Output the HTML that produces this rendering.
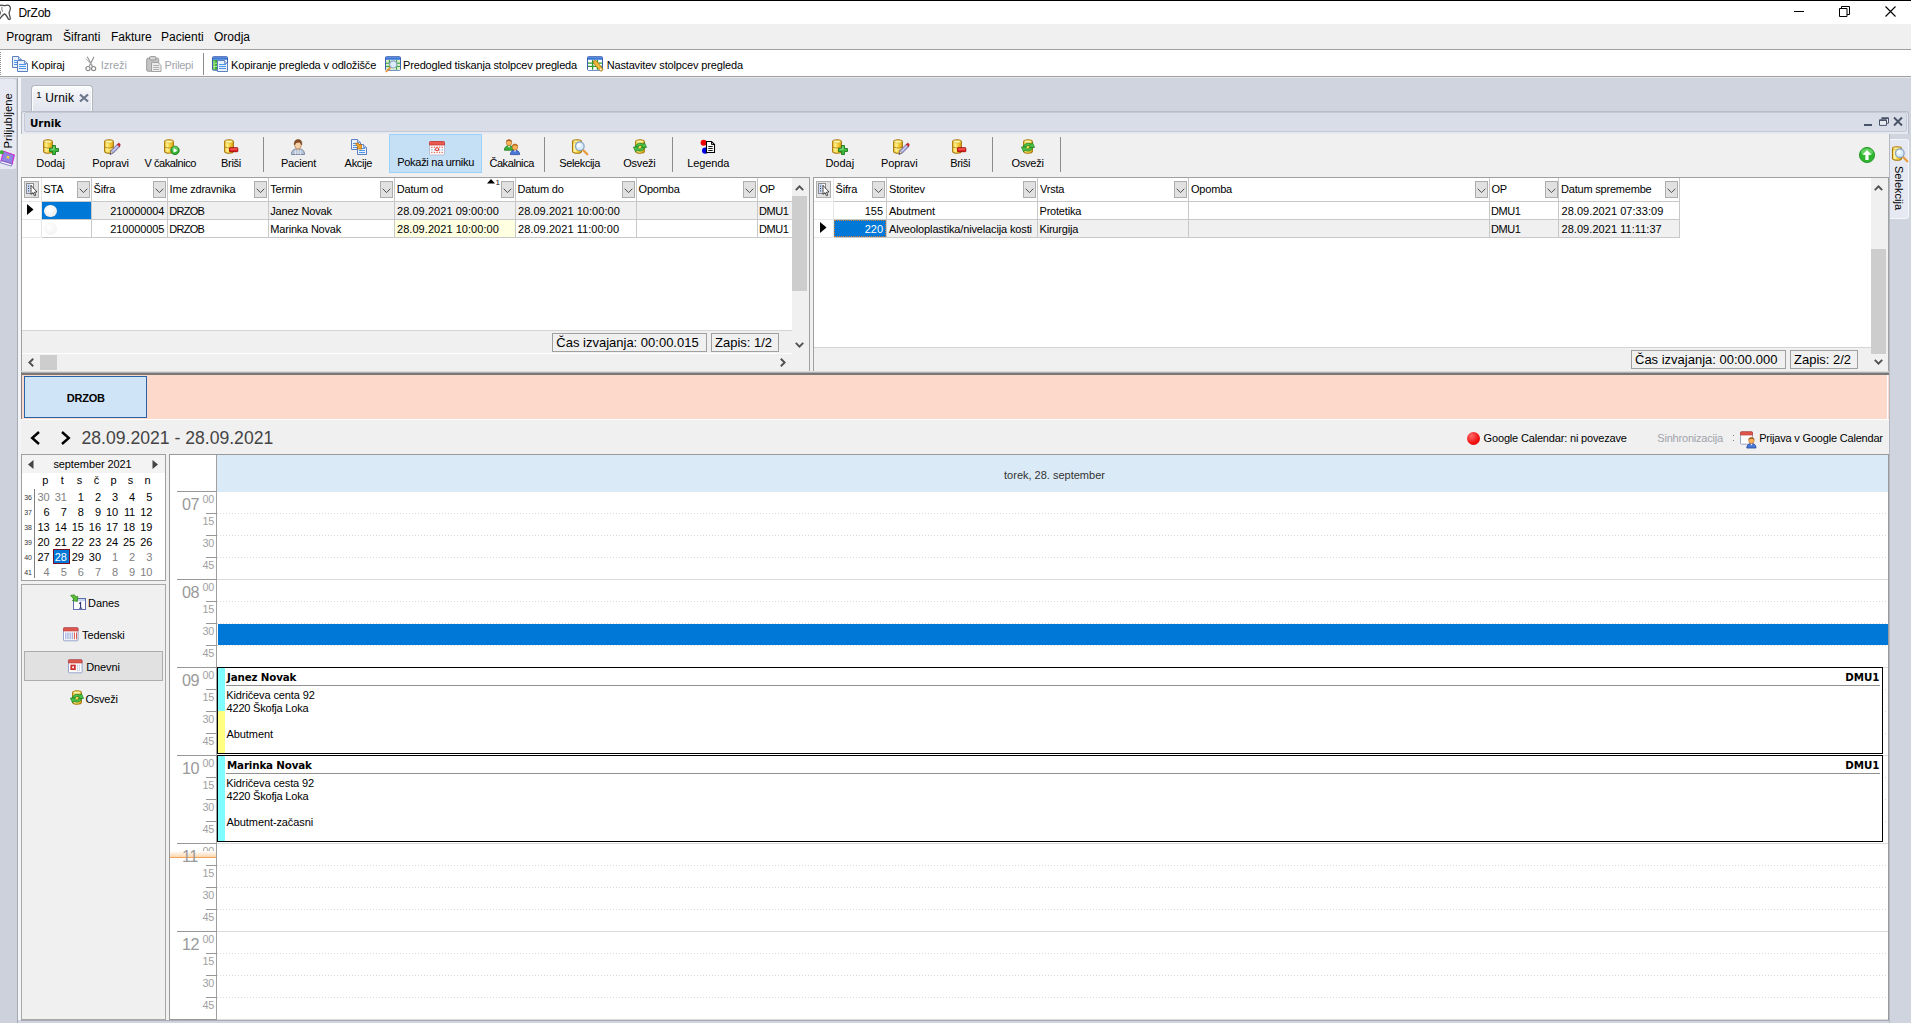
<!DOCTYPE html>
<html lang="sl"><head><meta charset="utf-8"><title>DrZob</title>
<style>
html,body{margin:0;padding:0;}
body{width:1911px;height:1023px;overflow:hidden;position:relative;background:#d0d4de;font-family:"Liberation Sans",sans-serif;font-size:11px;}
body div,body span,body svg{position:absolute;display:block;}
svg{overflow:visible}
</style></head><body>
<svg width="0" height="0" style="left:0;top:0"><defs><linearGradient id="gcyl" x1="0" y1="0" x2="1" y2="0"><stop offset="0" stop-color="#f2c832"/><stop offset=".3" stop-color="#fff08a"/><stop offset=".6" stop-color="#f5cf3a"/><stop offset="1" stop-color="#d9a215"/></linearGradient></defs></svg>
<div style="left:0px;top:0px;width:1911px;height:24px;background:#fff;"></div>
<div style="left:0px;top:0px;width:1911px;height:1px;background:#000;"></div>
<svg style="left:-3.5px;top:4px;" width="15" height="16.5" viewBox="0 0 14 16" preserveAspectRatio="none"><path d="M2.4 1.6 C4 .6 5.6 1.6 7 1.6 C8.4 1.6 10.2 .4 11.6 1.8 C13 3.4 12.4 6 11.4 8 C10.8 9.4 12.8 13.6 12.4 14.6 C12 15.4 10.8 15 10.4 14.2 C9.6 12.6 8.4 10.2 7 9.6 C5.6 10.2 3.4 13.4 2.2 14.8 C1.6 15.4 .4 15 .8 14 C1.4 12.6 3.4 9.6 3 8.2 C2.4 6.2 .8 3.2 2.4 1.6Z" fill="#fff" stroke="#4a4a4a" stroke-width="1.2"/><path d="M4.6 2.6 C4 4.4 4.4 6 5.4 7.4" fill="none" stroke="#9a9a9a" stroke-width="1.2"/></svg>
<span style="top:6.84px;font-size:12px;line-height:12px;color:#000;white-space:pre;letter-spacing:-0.25px;left:18.4px;">DrZob</span>
<div style="left:1794px;top:11px;width:10px;height:1px;background:#000;"></div>
<svg style="left:1839px;top:6px;" width="11" height="11" viewBox="0 0 11 11"><path d="M.5 2.5h7.5v8h-7.5zM2.5 2.5v-2h8v8h-2.5" fill="none" stroke="#000" stroke-width="1"/></svg>
<svg style="left:1885px;top:6px;" width="11" height="11" viewBox="0 0 11 11"><path d="M.5 .5l10 10M10.5 .5l-10 10" stroke="#000" stroke-width="1.1"/></svg>
<div style="left:0px;top:24px;width:1911px;height:25px;background:#f0f0f0;"></div>
<span style="top:30.84px;font-size:12px;line-height:12px;color:#000;white-space:pre;left:6.3px;">Program</span>
<span style="top:30.84px;font-size:12px;line-height:12px;color:#000;white-space:pre;left:63px;">Šifranti</span>
<span style="top:30.84px;font-size:12px;line-height:12px;color:#000;white-space:pre;left:111px;">Fakture</span>
<span style="top:30.84px;font-size:12px;line-height:12px;color:#000;white-space:pre;left:161px;">Pacienti</span>
<span style="top:30.84px;font-size:12px;line-height:12px;color:#000;white-space:pre;left:214px;">Orodja</span>
<div style="left:0px;top:49px;width:1911px;height:1px;background:#a0a0a0;"></div>
<div style="left:0px;top:50px;width:1911px;height:26px;background:#fff;"></div>
<div style="left:0px;top:76px;width:1911px;height:1px;background:#a0a0a0;"></div>
<div style="left:0px;top:77px;width:1911px;height:1px;background:#e8e8e8;"></div>
<div style="left:0px;top:52px;width:1px;height:1px;background:#909090;"></div>
<div style="left:0px;top:54px;width:1px;height:1px;background:#909090;"></div>
<div style="left:0px;top:56px;width:1px;height:1px;background:#909090;"></div>
<div style="left:0px;top:58px;width:1px;height:1px;background:#909090;"></div>
<div style="left:0px;top:60px;width:1px;height:1px;background:#909090;"></div>
<div style="left:0px;top:62px;width:1px;height:1px;background:#909090;"></div>
<div style="left:0px;top:64px;width:1px;height:1px;background:#909090;"></div>
<div style="left:0px;top:66px;width:1px;height:1px;background:#909090;"></div>
<div style="left:0px;top:68px;width:1px;height:1px;background:#909090;"></div>
<div style="left:0px;top:70px;width:1px;height:1px;background:#909090;"></div>
<div style="left:0px;top:72px;width:1px;height:1px;background:#909090;"></div>
<div style="left:0px;top:74px;width:1px;height:1px;background:#909090;"></div>
<svg style="left:11.5px;top:56px;" width="16" height="16" viewBox="0 0 16 16"><path d="M0.5 0.5h6l3 3v8h-9z" fill="#eaf2fd" stroke="#5d7fc0" stroke-width="1"/><path d="M6.5 0.5v3h3" fill="#c6d8f4" stroke="#5d7fc0" stroke-width=".8"/><rect x="2.0" y="4" width="6" height="1" fill="#4d95e8"/><rect x="2.0" y="6" width="6" height="1" fill="#4d95e8"/><rect x="2.0" y="8" width="6" height="1" fill="#4d95e8"/><path d="M5.5 4.5h7l3 3v8h-10z" fill="#eaf2fd" stroke="#5d7fc0" stroke-width="1"/><path d="M12.5 4.5v3h3" fill="#c6d8f4" stroke="#5d7fc0" stroke-width=".8"/><rect x="7.0" y="8" width="7" height="1" fill="#4d95e8"/><rect x="7.0" y="10" width="7" height="1" fill="#4d95e8"/><rect x="7.0" y="12" width="7" height="1" fill="#4d95e8"/></svg>
<span style="top:59.69px;font-size:11px;line-height:11px;color:#000;white-space:pre;letter-spacing:-0.15px;left:31.3px;">Kopiraj</span>
<svg style="left:83px;top:55.5px;" width="14" height="16" viewBox="0 0 14 16"><path d="M4.2 .8 L9.6 10.6 M11 .8 L6.2 10.2" stroke="#9a9a9a" stroke-width="1.3" fill="none"/><circle cx="5" cy="12.6" r="2.1" fill="none" stroke="#8c8c8c" stroke-width="1.2"/><circle cx="10.6" cy="12.6" r="2.1" fill="none" stroke="#8c8c8c" stroke-width="1.2"/><path d="M2.6 2.6 L8 8.2" stroke="#b4b4b4" stroke-width="1"/></svg>
<span style="top:59.69px;font-size:11px;line-height:11px;color:#a0a4ac;white-space:pre;left:100.7px;">Izreži</span>
<svg style="left:146px;top:55.5px;" width="16" height="16" viewBox="0 0 16 16"><rect x=".7" y="2.2" width="12" height="13" rx="1.2" fill="#c4c4c4" stroke="#9a9a9a" stroke-width="1"/><rect x="3.6" y=".6" width="6.2" height="3.4" rx=".8" fill="#d8d8d8" stroke="#8e8e8e" stroke-width=".9"/><path d="M5.5 6.5h6.5l3 3v6h-9.5z" fill="#ededed" stroke="#9c9c9c" stroke-width=".9"/><path d="M7.2 9.5h6M7.2 11.5h6M7.2 13.5h6" stroke="#a8a8a8" stroke-width=".9"/></svg>
<span style="top:59.69px;font-size:11px;line-height:11px;color:#a0a4ac;white-space:pre;letter-spacing:-0.3px;left:164.6px;">Prilepi</span>
<div style="left:203px;top:53px;width:1px;height:22px;background:#8c8c8c;"></div>
<svg style="left:211.5px;top:56px;" width="16" height="16" viewBox="0 0 16 16"><rect x=".5" y=".7" width="15" height="13.5" rx=".8" fill="#fff" stroke="#3a5fae" stroke-width="1"/><rect x="1" y="1.2" width="14" height="2.6" fill="#3c78d8"/><rect x="1" y="4" width="5" height="9.8" fill="#35a535"/><path d="M1 7.2h5M1 10.4h5" stroke="#c6f0b0" stroke-width="1"/><rect x="1.2" y="4.6" width="2" height="2" fill="#8fe070"/><rect x="1.2" y="7.8" width="2" height="2" fill="#8fe070"/><rect x="1.2" y="11" width="2" height="2" fill="#8fe070"/><path d="M5.5 4.5h7l3 3v8h-10z" fill="#eaf2fd" stroke="#5d7fc0" stroke-width="1"/><path d="M12.5 4.5v3h3" fill="#c6d8f4" stroke="#5d7fc0" stroke-width=".8"/><rect x="7.0" y="8" width="7" height="1" fill="#4d95e8"/><rect x="7.0" y="10" width="7" height="1" fill="#4d95e8"/><rect x="7.0" y="12" width="7" height="1" fill="#4d95e8"/></svg>
<span style="top:59.69px;font-size:11px;line-height:11px;color:#000;white-space:pre;letter-spacing:-0.16px;left:231.1px;">Kopiranje pregleda v odložišče</span>
<svg style="left:384.5px;top:56px;" width="16" height="16" viewBox="0 0 16 16"><rect x=".5" y=".7" width="15" height="13.5" rx=".8" fill="#fff" stroke="#3a5fae" stroke-width="1"/><rect x="1" y="1.2" width="14" height="2.6" fill="#3c78d8"/><path d="M1 4h14v9.8h-14z" fill="#dff0d0"/><path d="M1 7.2h14M1 10.4h14M4.4 4v9.8M11.6 4v9.8" stroke="#2f9a2f" stroke-width="1"/><path d="M5.4 11.4 L1.4 15.4" stroke="#e89a3c" stroke-width="2" stroke-linecap="round"/><circle cx="8.2" cy="8.4" r="3.6" fill="#dcecfb" stroke="#8aa4c4" stroke-width="1.2"/></svg>
<span style="top:59.69px;font-size:11px;line-height:11px;color:#000;white-space:pre;letter-spacing:-0.16px;left:403px;">Predogled tiskanja stolpcev pregleda</span>
<svg style="left:587px;top:56px;" width="16" height="16" viewBox="0 0 16 16"><rect x=".5" y=".7" width="15" height="13.5" rx=".8" fill="#fff" stroke="#3a5fae" stroke-width="1"/><rect x="1" y="1.2" width="14" height="2.6" fill="#3c78d8"/><path d="M1 4h14v9.8h-14z" fill="#fff"/><path d="M1 7.2h14M1 10.4h14M5.6 4v9.8M10.4 4v9.8" stroke="#2f9a2f" stroke-width="1.3"/><path d="M6.2 5 L9 4.4 L15.6 12.6 C16.6 14 14.2 16 13 14.6 L7 7.8 Z" fill="#f0b838" stroke="#a87410" stroke-width=".8"/><circle cx="13.8" cy="13.4" r=".8" fill="#fff"/></svg>
<span style="top:59.69px;font-size:11px;line-height:11px;color:#000;white-space:pre;letter-spacing:-0.16px;left:606.7px;">Nastavitev stolpcev pregleda</span>
<div style="left:0px;top:78px;width:17px;height:945px;background:#cdd1db;"></div>
<div style="left:0px;top:79px;width:16px;height:90px;background:#e6e9f1;border-radius:0 2px 2px 0;"></div>
<div style="left:17px;top:78px;width:1px;height:945px;background:#a8acb4;"></div>
<div style="left:18px;top:78px;width:3px;height:945px;background:#f3f4f7;"></div>
<span style="left:8.5px;top:121px;width:0;height:0;overflow:visible;"><span style="left:-28.2px;top:-6px;width:55px;font-size:11.3px;line-height:12px;white-space:pre;transform:rotate(-90deg);transform-origin:50% 50%;">Priljubljene</span></span>
<svg style="left:-1px;top:149px;" width="17" height="17" viewBox="0 0 15 15"><g transform="rotate(28 7 8)"><path d="M1.5 4 L11.5 2.5 L13.5 10.5 L3.5 12.5Z" fill="#8c84e0" stroke="#d020d0" stroke-width=".9"/><path d="M3.5 12.5 L13.5 10.5 L13.8 12.4 L4 14.4Z" fill="#f4f4ff" stroke="#6a62c0" stroke-width=".6"/><path d="M6 6.2l2.4-.6.6 2.6-1.2-.6-1.1 1z" fill="#f0d040"/></g><circle cx="2.4" cy="2.8" r="1.8" fill="#38b038"/></svg>
<div style="left:31px;top:85px;width:62px;height:26px;background:linear-gradient(#fbfcfd,#eceef4 45%,#e2e5ee);border-radius:4px 4px 0 0;border:1px solid #b4b7be;border-bottom:none;box-sizing:border-box;box-shadow:inset 1px 1px 0 #fdfeff,inset -1px 0 0 #fdfeff;"></div>
<span style="top:89.96px;font-size:9.5px;line-height:9.5px;color:#000;white-space:pre;left:36.3px;">1</span>
<span style="top:91.84px;font-size:12px;line-height:12px;color:#000;white-space:pre;letter-spacing:0.2px;left:45.2px;">Urnik</span>
<svg style="left:78.5px;top:94px;" width="10" height="8" viewBox="0 0 10 8"><path d="M1 .5L9 7.5M9 .5L1 7.5" stroke="#6a768c" stroke-width="2.2"/></svg>
<div style="left:21px;top:111px;width:1888px;height:23px;background:#e6e9f0;border-radius:3px 3px 0 0;border:1px solid #b8bcc6;border-bottom:none;box-sizing:border-box;"></div>
<div style="left:24px;top:112px;width:1883px;height:20px;background:#d9dde7;border:1px solid #c4c9d6;box-sizing:border-box;border-radius:2px;"></div>
<span style="top:118.24px;font-size:10.3px;line-height:10.3px;color:#000;white-space:pre;font-weight:700;font-family:'DejaVu Sans',sans-serif;left:30px;">Urnik</span>
<div style="left:1864px;top:124px;width:8px;height:2px;background:#4a5468;"></div>
<svg style="left:1879px;top:117px;" width="10" height="9" viewBox="0 0 10 9"><path d="M2.5 .8h7v5.4h-2M.5 2.8h7v5.6h-7z" fill="#e8ebf2" stroke="#4a5468" stroke-width="1"/><path d="M.5 3.4h7M2.5 1.4h7" stroke="#4a5468" stroke-width="1.2"/></svg>
<svg style="left:1893px;top:117px;" width="10" height="9" viewBox="0 0 10 9"><path d="M1 .5L9 8.5M9 .5L1 8.5" stroke="#4a5468" stroke-width="1.9"/></svg>
<div style="left:21px;top:134px;width:1868px;height:889px;background:#f0f0f0;"></div>
<div style="left:1889px;top:134px;width:22px;height:889px;background:#d0d4de;"></div>
<div style="left:1889px;top:134px;width:1px;height:889px;background:#b4b8c2;"></div>
<div style="left:1890px;top:139px;width:19px;height:80px;background:#e6e9f1;border-radius:0 3px 3px 0;border:1px solid #f4f6fa;border-left:none;box-sizing:border-box;"></div>
<svg style="left:1892px;top:146px;" width="16" height="16" viewBox="0 0 16 16"><path d="M0.5 2.6 C0.5 0.2 9.5 0.2 9.5 2.6 L9.5 12.4 C9.5 14.9 0.5 14.9 0.5 12.4 Z" fill="url(#gcyl)" stroke="#a97a10" stroke-width="1.1"/><path d="M1 2.6 C1 0.9 9 0.9 9 2.6 C9 4.3 1 4.3 1 2.6Z" fill="#fdf2a0" stroke="#c9a227" stroke-width=".6"/><rect x="1.6" y="4.5" width="2" height="8.5" fill="#fff7b8" opacity=".8"/><path d="M10.5 10.5 L15.3 15.3" stroke="#e89a3c" stroke-width="2.2" stroke-linecap="round"/><circle cx="7.8" cy="7.2" r="4.3" fill="#d8ecfb" stroke="#8aa4c4" stroke-width="1.3"/><circle cx="6.8" cy="6.2" r="2" fill="#fff" opacity=".8"/></svg>
<span style="left:1898.5px;top:188px;width:0;height:0;overflow:visible;"><span style="left:-25px;top:-6px;width:50px;text-align:center;font-size:11px;line-height:12px;white-space:pre;transform:rotate(90deg);transform-origin:50% 50%;">Selekcija</span></span>
<svg style="left:43px;top:139px;" width="16" height="16" viewBox="0 0 16 16"><path d="M0.6 2.7 C0.6 0.1 9.4 0.1 9.4 2.7 L9.4 12.3 C9.4 14.9 0.6 14.9 0.6 12.3 Z" fill="url(#gcyl)" stroke="#a97a10" stroke-width="1.1"/><path d="M1.2 2.7 C1.2 1 8.8 1 8.8 2.7 C8.8 4.3 1.2 4.3 1.2 2.7Z" fill="#fff6b0" stroke="#c9a227" stroke-width=".5"/><path d="M0.6 7.4 C0.6 9.6 9.4 9.6 9.4 7.4" fill="none" stroke="#a97a10" stroke-width=".9"/><path d="M1.2 8.2 C2.5 9.6 7.5 9.6 8.8 8.2" fill="none" stroke="#fff6b0" stroke-width=".7" transform="translate(0 1)"/><path d="M9.5 6.5h3v3h3v3h-3v3h-3v-3h-3v-3h3z" fill="#3cb83c" stroke="#1d7a1d" stroke-width=".9"/><path d="M10.3 7.5h1.2v3.2h-3.8v-1h2.6z" fill="#9be89b" opacity=".8"/></svg>
<span style="top:157.89px;font-size:11px;line-height:11px;color:#000;white-space:pre;left:36.2px;">Dodaj</span>
<svg style="left:103.5px;top:139px;" width="16" height="16" viewBox="0 0 16 16"><path d="M0.6 2.7 C0.6 0.1 9.4 0.1 9.4 2.7 L9.4 12.3 C9.4 14.9 0.6 14.9 0.6 12.3 Z" fill="url(#gcyl)" stroke="#a97a10" stroke-width="1.1"/><path d="M1.2 2.7 C1.2 1 8.8 1 8.8 2.7 C8.8 4.3 1.2 4.3 1.2 2.7Z" fill="#fff6b0" stroke="#c9a227" stroke-width=".5"/><path d="M0.6 7.4 C0.6 9.6 9.4 9.6 9.4 7.4" fill="none" stroke="#a97a10" stroke-width=".9"/><path d="M1.2 8.2 C2.5 9.6 7.5 9.6 8.8 8.2" fill="none" stroke="#fff6b0" stroke-width=".7" transform="translate(0 1)"/><path d="M6 15.3 L7 11.6 L13.2 5.4 L15.6 7.8 L9.4 14 Z" fill="#a9a9dc" stroke="#55558a" stroke-width=".7"/><path d="M13.2 5.4 L14.3 4.3 C15 3.6 16.8 5.4 16.1 6.1 L15.6 7.8Z" fill="#e02020" stroke="#901010" stroke-width=".5"/><path d="M6 15.3 L7 11.6 L9.4 14 Z" fill="#f0d8a0" stroke="#55558a" stroke-width=".5"/><path d="M6 15.3l.4-1.4 1 1z" fill="#222"/><path d="M8 12.6 L14 6.6" stroke="#e8e8ff" stroke-width=".9"/></svg>
<span style="top:157.89px;font-size:11px;line-height:11px;color:#000;white-space:pre;letter-spacing:-0.1px;left:92.3px;">Popravi</span>
<svg style="left:164px;top:139px;" width="16" height="16" viewBox="0 0 16 16"><path d="M0.6 2.7 C0.6 0.1 9.4 0.1 9.4 2.7 L9.4 12.3 C9.4 14.9 0.6 14.9 0.6 12.3 Z" fill="url(#gcyl)" stroke="#a97a10" stroke-width="1.1"/><path d="M1.2 2.7 C1.2 1 8.8 1 8.8 2.7 C8.8 4.3 1.2 4.3 1.2 2.7Z" fill="#fff6b0" stroke="#c9a227" stroke-width=".5"/><path d="M0.6 7.4 C0.6 9.6 9.4 9.6 9.4 7.4" fill="none" stroke="#a97a10" stroke-width=".9"/><path d="M1.2 8.2 C2.5 9.6 7.5 9.6 8.8 8.2" fill="none" stroke="#fff6b0" stroke-width=".7" transform="translate(0 1)"/><circle cx="11" cy="11.4" r="4.2" fill="#2fb02f" stroke="#1a7a1a" stroke-width=".9"/><circle cx="11" cy="10.2" r="2.9" fill="#7de07d" opacity=".6"/><path d="M9.6 9 L13.4 11.4 L9.6 13.8 Z" fill="#fff"/></svg>
<span style="top:157.89px;font-size:11px;line-height:11px;color:#000;white-space:pre;letter-spacing:-0.43px;left:144.5px;">V čakalnico</span>
<svg style="left:223.5px;top:139px;" width="16" height="16" viewBox="0 0 16 16"><path d="M0.6 2.7 C0.6 0.1 9.4 0.1 9.4 2.7 L9.4 12.3 C9.4 14.9 0.6 14.9 0.6 12.3 Z" fill="url(#gcyl)" stroke="#a97a10" stroke-width="1.1"/><path d="M1.2 2.7 C1.2 1 8.8 1 8.8 2.7 C8.8 4.3 1.2 4.3 1.2 2.7Z" fill="#fff6b0" stroke="#c9a227" stroke-width=".5"/><path d="M0.6 7.4 C0.6 9.6 9.4 9.6 9.4 7.4" fill="none" stroke="#a97a10" stroke-width=".9"/><path d="M1.2 8.2 C2.5 9.6 7.5 9.6 8.8 8.2" fill="none" stroke="#fff6b0" stroke-width=".7" transform="translate(0 1)"/><rect x="5.5" y="8.7" width="8.3" height="4" rx=".5" fill="#e62020" stroke="#a00f0f" stroke-width=".9"/><rect x="6.3" y="9.5" width="6.7" height="1.1" fill="#ff8a7a" opacity=".8"/></svg>
<span style="top:157.89px;font-size:11px;line-height:11px;color:#000;white-space:pre;letter-spacing:-0.3px;left:221px;">Briši</span>
<div style="left:263px;top:137px;width:1px;height:35px;background:#8c8c8c;"></div>
<svg style="left:290px;top:139px;" width="16" height="16" viewBox="0 0 16 16"><path d="M1.5 15.5 C1.5 11.5 4 10.2 6 10 L10 10 C12 10.2 14.5 11.5 14.5 15.5Z" fill="#b9c4d6" stroke="#6d7c96" stroke-width=".9"/><path d="M5 11.5h1v4h-1zM7.5 11.5h1v4h-1zM10 11.5h1v4h-1z" fill="#dfe6f2"/><path d="M6.3 9.2 L8 11.6 L9.7 9.2Z" fill="#f2c9a0"/><ellipse cx="8" cy="6" rx="3.3" ry="4" fill="#f4cfa6" stroke="#b07a48" stroke-width=".7"/><path d="M4.4 6 C3.8 1.6 6.4 .6 8.2 .6 C10.6 .6 12.4 2.2 11.6 6 C11.2 4.2 10.4 3.4 9 3.2 C7 3 5.2 3.8 4.4 6Z" fill="#8a4f24" stroke="#5e3414" stroke-width=".5"/></svg>
<span style="top:157.89px;font-size:11px;line-height:11px;color:#000;white-space:pre;letter-spacing:-0.25px;left:281px;">Pacient</span>
<svg style="left:351px;top:139px;" width="16" height="16" viewBox="0 0 16 16"><path d="M0.5 0.5h6l3 3v7h-9z" fill="#eaf2fd" stroke="#5d7fc0" stroke-width="1"/><path d="M6.5 0.5v3h3" fill="#c6d8f4" stroke="#5d7fc0" stroke-width=".8"/><rect x="2.0" y="4" width="6" height="1" fill="#4d95e8"/><rect x="2.0" y="6" width="6" height="1" fill="#4d95e8"/><rect x="2.0" y="8" width="6" height="1" fill="#4d95e8"/><path d="M6.5 5.5h6l3 3v7h-9z" fill="#eaf2fd" stroke="#5d7fc0" stroke-width="1"/><path d="M12.5 5.5v3h3" fill="#c6d8f4" stroke="#5d7fc0" stroke-width=".8"/><rect x="8.0" y="9" width="6" height="1" fill="#4d95e8"/><rect x="8.0" y="11" width="6" height="1" fill="#4d95e8"/><rect x="8.0" y="13" width="6" height="1" fill="#4d95e8"/><path d="M4.2 4.4 L7 4 L8.6 6 L10.6 5.4 L10.4 10.2 L5.8 9.6 L7 8 Z" fill="#f7a823" stroke="#b86a08" stroke-width=".7"/></svg>
<span style="top:157.89px;font-size:11px;line-height:11px;color:#000;white-space:pre;letter-spacing:-0.3px;left:344.6px;">Akcije</span>
<div style="left:389px;top:134px;width:93px;height:39px;background:#c5dff5;border:1px solid #99d1ff;box-sizing:border-box;"></div>
<svg style="left:429px;top:140px;" width="16" height="16" viewBox="0 0 16 16"><rect x=".5" y="1.5" width="15" height="13.5" rx="1" fill="#fff" stroke="#b8bfd0" stroke-width="1"/><path d="M.5 2.5 a1 1 0 0 1 1-1 h13 a1 1 0 0 1 1 1 V5 H.5Z" fill="#e85a50" stroke="#c03830" stroke-width=".8"/><rect x="2.2" y="6.6" width="1.3" height="1.3" fill="#e06a60"/><rect x="2.2" y="9.2" width="1.3" height="1.3" fill="#9aa6c8"/><rect x="2.2" y="11.8" width="1.3" height="1.3" fill="#e06a60"/><rect x="4.800000000000001" y="6.6" width="1.3" height="1.3" fill="#e06a60"/><rect x="4.800000000000001" y="9.2" width="1.3" height="1.3" fill="#9aa6c8"/><rect x="4.800000000000001" y="11.8" width="1.3" height="1.3" fill="#e06a60"/><rect x="7.4" y="6.6" width="1.3" height="1.3" fill="#e06a60"/><rect x="7.4" y="9.2" width="1.3" height="1.3" fill="#9aa6c8"/><rect x="7.4" y="11.8" width="1.3" height="1.3" fill="#e06a60"/><rect x="10.0" y="6.6" width="1.3" height="1.3" fill="#e06a60"/><rect x="10.0" y="9.2" width="1.3" height="1.3" fill="#9aa6c8"/><rect x="10.0" y="11.8" width="1.3" height="1.3" fill="#e06a60"/><rect x="12.600000000000001" y="6.6" width="1.3" height="1.3" fill="#e06a60"/><rect x="12.600000000000001" y="9.2" width="1.3" height="1.3" fill="#9aa6c8"/><rect x="12.600000000000001" y="11.8" width="1.3" height="1.3" fill="#e06a60"/><rect x="6.4" y="7.6" width="3.4" height="3.4" fill="#fff"/><circle cx="8.1" cy="9.3" r="1.5" fill="#fff" stroke="#e03830" stroke-width="1.1"/></svg>
<span style="top:156.89px;font-size:11px;line-height:11px;color:#000;white-space:pre;letter-spacing:-0.28px;left:397.2px;">Pokaži na urniku</span>
<svg style="left:504px;top:139px;" width="16" height="16" viewBox="0 0 16 16"><path d="M0.40000000000000036 11.2 C0.40000000000000036 8.0 2.6 7.0 3.8 6.800000000000001 L6.2 6.800000000000001 C7.4 7.0 9.6 8.0 9.6 11.2Z" fill="#3fae3f" stroke="#1c7a1c" stroke-width=".8"/><path d="M4 6.9 L5 8.8 L6 6.9Z" fill="#fff"/><ellipse cx="5" cy="3.6" rx="2.7" ry="3.1" fill="#f7b25c" stroke="#b86a18" stroke-width=".6"/><path d="M2 3.4 C1.6 -0.19999999999999973 8.4 -0.19999999999999973 8 3.4 C7 1.6 3 1.6 2 3.4Z" fill="#9a5a20"/><path d="M6.4 15.6 C6.4 12.4 8.6 11.4 9.8 11.2 L12.2 11.2 C13.4 11.4 15.6 12.4 15.6 15.6Z" fill="#4a78d8" stroke="#234a9c" stroke-width=".8"/><path d="M10 11.3 L11 13.2 L12 11.3Z" fill="#fff"/><ellipse cx="11" cy="8" rx="2.7" ry="3.1" fill="#f7b25c" stroke="#b86a18" stroke-width=".6"/><path d="M8 7.8 C7.6 4.2 14.4 4.2 14 7.8 C13 6 9 6 8 7.8Z" fill="#b86a1c"/></svg>
<span style="top:157.89px;font-size:11px;line-height:11px;color:#000;white-space:pre;letter-spacing:-0.42px;left:489.4px;">Čakalnica</span>
<div style="left:544px;top:137px;width:1px;height:35px;background:#8c8c8c;"></div>
<svg style="left:572px;top:139px;" width="16" height="16" viewBox="0 0 16 16"><path d="M0.5 2.6 C0.5 0.2 9.5 0.2 9.5 2.6 L9.5 12.4 C9.5 14.9 0.5 14.9 0.5 12.4 Z" fill="url(#gcyl)" stroke="#a97a10" stroke-width="1.1"/><path d="M1 2.6 C1 0.9 9 0.9 9 2.6 C9 4.3 1 4.3 1 2.6Z" fill="#fdf2a0" stroke="#c9a227" stroke-width=".6"/><rect x="1.6" y="4.5" width="2" height="8.5" fill="#fff7b8" opacity=".8"/><path d="M10.5 10.5 L15.3 15.3" stroke="#e89a3c" stroke-width="2.2" stroke-linecap="round"/><circle cx="7.8" cy="7.2" r="4.3" fill="#d8ecfb" stroke="#8aa4c4" stroke-width="1.3"/><circle cx="6.8" cy="6.2" r="2" fill="#fff" opacity=".8"/></svg>
<span style="top:157.89px;font-size:11px;line-height:11px;color:#000;white-space:pre;letter-spacing:-0.38px;left:559.3px;">Selekcija</span>
<svg style="left:632px;top:139px;" width="16" height="16" viewBox="0 0 16 16"><path d="M3.6 2.7 C3.6 0.1 12.4 0.1 12.4 2.7 L12.4 12.3 C12.4 14.9 3.6 14.9 3.6 12.3 Z" fill="url(#gcyl)" stroke="#a97a10" stroke-width="1.1"/><path d="M4.2 2.7 C4.2 1 11.8 1 11.8 2.7 C11.8 4.3 4.2 4.3 4.2 2.7Z" fill="#fff6b0" stroke="#c9a227" stroke-width=".5"/><path d="M3.4 7.6 C4.2 4.4 8.6 3.4 11.2 5.2 L12.4 3.6 L14.6 8.4 L9.4 8.6 L10.4 7 C8.8 6 6.4 6.4 5.6 8.2 Z" fill="#48c448" stroke="#1d7a1d" stroke-width=".7"/><path d="M3.4 7.6 C4.2 4.4 8.6 3.4 11.2 5.2 L12.4 3.6 L14.6 8.4 L9.4 8.6 L10.4 7 C8.8 6 6.4 6.4 5.6 8.2 Z" fill="#48c448" stroke="#1d7a1d" stroke-width=".7" transform="rotate(180 8 8.2)"/></svg>
<span style="top:157.89px;font-size:11px;line-height:11px;color:#000;white-space:pre;letter-spacing:-0.2px;left:623.2px;">Osveži</span>
<div style="left:672px;top:137px;width:1px;height:35px;background:#8c8c8c;"></div>
<svg style="left:700px;top:139px;" width="16" height="16" viewBox="0 0 16 16"><circle cx="3.6" cy="3.8" r="3" fill="#f00000"/><circle cx="5.2" cy="11.6" r="3.2" fill="#0000e0"/><path d="M6.5 2.5h5l3 3v8h-8z" fill="#fff" stroke="#000" stroke-width="1.1"/><path d="M11.5 2.5v3h3" fill="none" stroke="#000" stroke-width=".9"/><path d="M8.3 7.5h4.4M8.3 9.5h4.4M8.3 11.5h4.4" stroke="#000" stroke-width=".9"/></svg>
<span style="top:157.89px;font-size:11px;line-height:11px;color:#000;white-space:pre;letter-spacing:-0.1px;left:687.2px;">Legenda</span>
<svg style="left:831.5px;top:139px;" width="16" height="16" viewBox="0 0 16 16"><path d="M0.6 2.7 C0.6 0.1 9.4 0.1 9.4 2.7 L9.4 12.3 C9.4 14.9 0.6 14.9 0.6 12.3 Z" fill="url(#gcyl)" stroke="#a97a10" stroke-width="1.1"/><path d="M1.2 2.7 C1.2 1 8.8 1 8.8 2.7 C8.8 4.3 1.2 4.3 1.2 2.7Z" fill="#fff6b0" stroke="#c9a227" stroke-width=".5"/><path d="M0.6 7.4 C0.6 9.6 9.4 9.6 9.4 7.4" fill="none" stroke="#a97a10" stroke-width=".9"/><path d="M1.2 8.2 C2.5 9.6 7.5 9.6 8.8 8.2" fill="none" stroke="#fff6b0" stroke-width=".7" transform="translate(0 1)"/><path d="M9.5 6.5h3v3h3v3h-3v3h-3v-3h-3v-3h3z" fill="#3cb83c" stroke="#1d7a1d" stroke-width=".9"/><path d="M10.3 7.5h1.2v3.2h-3.8v-1h2.6z" fill="#9be89b" opacity=".8"/></svg>
<span style="top:157.89px;font-size:11px;line-height:11px;color:#000;white-space:pre;left:825.4px;">Dodaj</span>
<svg style="left:892.5px;top:139px;" width="16" height="16" viewBox="0 0 16 16"><path d="M0.6 2.7 C0.6 0.1 9.4 0.1 9.4 2.7 L9.4 12.3 C9.4 14.9 0.6 14.9 0.6 12.3 Z" fill="url(#gcyl)" stroke="#a97a10" stroke-width="1.1"/><path d="M1.2 2.7 C1.2 1 8.8 1 8.8 2.7 C8.8 4.3 1.2 4.3 1.2 2.7Z" fill="#fff6b0" stroke="#c9a227" stroke-width=".5"/><path d="M0.6 7.4 C0.6 9.6 9.4 9.6 9.4 7.4" fill="none" stroke="#a97a10" stroke-width=".9"/><path d="M1.2 8.2 C2.5 9.6 7.5 9.6 8.8 8.2" fill="none" stroke="#fff6b0" stroke-width=".7" transform="translate(0 1)"/><path d="M6 15.3 L7 11.6 L13.2 5.4 L15.6 7.8 L9.4 14 Z" fill="#a9a9dc" stroke="#55558a" stroke-width=".7"/><path d="M13.2 5.4 L14.3 4.3 C15 3.6 16.8 5.4 16.1 6.1 L15.6 7.8Z" fill="#e02020" stroke="#901010" stroke-width=".5"/><path d="M6 15.3 L7 11.6 L9.4 14 Z" fill="#f0d8a0" stroke="#55558a" stroke-width=".5"/><path d="M6 15.3l.4-1.4 1 1z" fill="#222"/><path d="M8 12.6 L14 6.6" stroke="#e8e8ff" stroke-width=".9"/></svg>
<span style="top:157.89px;font-size:11px;line-height:11px;color:#000;white-space:pre;letter-spacing:-0.1px;left:881px;">Popravi</span>
<svg style="left:952px;top:139px;" width="16" height="16" viewBox="0 0 16 16"><path d="M0.6 2.7 C0.6 0.1 9.4 0.1 9.4 2.7 L9.4 12.3 C9.4 14.9 0.6 14.9 0.6 12.3 Z" fill="url(#gcyl)" stroke="#a97a10" stroke-width="1.1"/><path d="M1.2 2.7 C1.2 1 8.8 1 8.8 2.7 C8.8 4.3 1.2 4.3 1.2 2.7Z" fill="#fff6b0" stroke="#c9a227" stroke-width=".5"/><path d="M0.6 7.4 C0.6 9.6 9.4 9.6 9.4 7.4" fill="none" stroke="#a97a10" stroke-width=".9"/><path d="M1.2 8.2 C2.5 9.6 7.5 9.6 8.8 8.2" fill="none" stroke="#fff6b0" stroke-width=".7" transform="translate(0 1)"/><rect x="5.5" y="8.7" width="8.3" height="4" rx=".5" fill="#e62020" stroke="#a00f0f" stroke-width=".9"/><rect x="6.3" y="9.5" width="6.7" height="1.1" fill="#ff8a7a" opacity=".8"/></svg>
<span style="top:157.89px;font-size:11px;line-height:11px;color:#000;white-space:pre;letter-spacing:-0.3px;left:950.2px;">Briši</span>
<div style="left:992px;top:137px;width:1px;height:35px;background:#8c8c8c;"></div>
<svg style="left:1020px;top:139px;" width="16" height="16" viewBox="0 0 16 16"><path d="M3.6 2.7 C3.6 0.1 12.4 0.1 12.4 2.7 L12.4 12.3 C12.4 14.9 3.6 14.9 3.6 12.3 Z" fill="url(#gcyl)" stroke="#a97a10" stroke-width="1.1"/><path d="M4.2 2.7 C4.2 1 11.8 1 11.8 2.7 C11.8 4.3 4.2 4.3 4.2 2.7Z" fill="#fff6b0" stroke="#c9a227" stroke-width=".5"/><path d="M3.4 7.6 C4.2 4.4 8.6 3.4 11.2 5.2 L12.4 3.6 L14.6 8.4 L9.4 8.6 L10.4 7 C8.8 6 6.4 6.4 5.6 8.2 Z" fill="#48c448" stroke="#1d7a1d" stroke-width=".7"/><path d="M3.4 7.6 C4.2 4.4 8.6 3.4 11.2 5.2 L12.4 3.6 L14.6 8.4 L9.4 8.6 L10.4 7 C8.8 6 6.4 6.4 5.6 8.2 Z" fill="#48c448" stroke="#1d7a1d" stroke-width=".7" transform="rotate(180 8 8.2)"/></svg>
<span style="top:157.89px;font-size:11px;line-height:11px;color:#000;white-space:pre;letter-spacing:-0.2px;left:1011.4px;">Osveži</span>
<div style="left:1060px;top:137px;width:1px;height:35px;background:#8c8c8c;"></div>
<svg style="left:1859px;top:147px;" width="16" height="16" viewBox="0 0 16 16"><circle cx="8" cy="8" r="7.6" fill="#2fb52f" stroke="#178a17" stroke-width=".8"/><ellipse cx="8" cy="5" rx="6" ry="3.6" fill="#8be88b" opacity=".55"/><path d="M8 3 L12.6 7.8 L9.6 7.8 L9.6 13 L6.4 13 L6.4 7.8 L3.4 7.8 Z" fill="#fff"/></svg>
<div style="left:21px;top:177px;width:789px;height:197px;background:#fff;border:1px solid #a0a0a0;box-sizing:border-box;border-bottom:none;"></div>
<div style="left:42px;top:202px;width:750px;height:17px;background:#f0f0f0;"></div>
<div style="left:42px;top:202px;width:49px;height:17px;background:#0078d7;"></div>
<div style="left:395px;top:220px;width:120px;height:17px;background:#ffffe1;"></div>
<div style="left:42px;top:201px;width:750px;height:1px;background:#c8c8c8;"></div>
<div style="left:22px;top:201px;width:19px;height:1px;background:#e6e6e6;"></div>
<div style="left:42px;top:219px;width:750px;height:1px;background:#c8c8c8;"></div>
<div style="left:22px;top:219px;width:19px;height:1px;background:#e6e6e6;"></div>
<div style="left:42px;top:237px;width:750px;height:1px;background:#c8c8c8;"></div>
<div style="left:22px;top:237px;width:19px;height:1px;background:#e6e6e6;"></div>
<div style="left:41px;top:178px;width:1px;height:59px;background:#c8c8c8;"></div>
<div style="left:91px;top:178px;width:1px;height:59px;background:#c8c8c8;"></div>
<div style="left:167px;top:178px;width:1px;height:59px;background:#c8c8c8;"></div>
<div style="left:268px;top:178px;width:1px;height:59px;background:#c8c8c8;"></div>
<div style="left:394px;top:178px;width:1px;height:59px;background:#c8c8c8;"></div>
<div style="left:515px;top:178px;width:1px;height:59px;background:#c8c8c8;"></div>
<div style="left:636px;top:178px;width:1px;height:59px;background:#c8c8c8;"></div>
<div style="left:757px;top:178px;width:1px;height:59px;background:#c8c8c8;"></div>
<div style="left:41px;top:178px;width:1px;height:59px;background:#e6e6e6;"></div>
<div style="left:24px;top:181px;width:15px;height:17px;background:#e1e1e1;border:1px solid #adadad;box-sizing:border-box;"></div>
<svg style="left:26px;top:183px;" width="12" height="14" viewBox="0 0 12 14"><rect x=".5" y=".5" width="7" height="10" fill="#fff" stroke="#8c8c8c" stroke-width="1"/><rect x="1.2" y="1.2" width="3" height="8.6" fill="#c4d4f6"/><rect x="2" y="2.6" width="1" height="1" fill="#404040"/><rect x="2" y="5" width="1" height="1" fill="#404040"/><rect x="2" y="7.4" width="1" height="1" fill="#404040"/><rect x="4.6" y="2.6" width="1" height="1" fill="#404040"/><rect x="4.6" y="5" width="1" height="1" fill="#404040"/><rect x="4.6" y="7.4" width="1" height="1" fill="#404040"/><path d="M5 2.4 L5 11.4 L7 9.6 L8.4 12.8 L9.8 12.2 L8.4 9.2 L11 9 Z" fill="#fff" stroke="#222" stroke-width=".8"/></svg>
<span style="top:183.89px;font-size:11px;line-height:11px;color:#000;white-space:pre;letter-spacing:-0.2px;left:43.3px;">STA</span>
<div style="left:77px;top:181px;width:13px;height:17px;background:#e1e1e1;border:1px solid #adadad;box-sizing:border-box;"></div>
<svg style="left:79px;top:188px;" width="9" height="6" viewBox="0 0 9 6"><path d="M.7 .7L4.5 4.6L8.3 .7" fill="none" stroke="#505050" stroke-width="1"/></svg>
<span style="top:183.89px;font-size:11px;line-height:11px;color:#000;white-space:pre;letter-spacing:-0.2px;left:93.5px;">Šifra</span>
<div style="left:153px;top:181px;width:13px;height:17px;background:#e1e1e1;border:1px solid #adadad;box-sizing:border-box;"></div>
<svg style="left:155px;top:188px;" width="9" height="6" viewBox="0 0 9 6"><path d="M.7 .7L4.5 4.6L8.3 .7" fill="none" stroke="#505050" stroke-width="1"/></svg>
<span style="top:183.89px;font-size:11px;line-height:11px;color:#000;white-space:pre;letter-spacing:-0.2px;left:169.6px;">Ime zdravnika</span>
<div style="left:254px;top:181px;width:13px;height:17px;background:#e1e1e1;border:1px solid #adadad;box-sizing:border-box;"></div>
<svg style="left:256px;top:188px;" width="9" height="6" viewBox="0 0 9 6"><path d="M.7 .7L4.5 4.6L8.3 .7" fill="none" stroke="#505050" stroke-width="1"/></svg>
<span style="top:183.89px;font-size:11px;line-height:11px;color:#000;white-space:pre;letter-spacing:-0.2px;left:270.3px;">Termin</span>
<div style="left:380px;top:181px;width:13px;height:17px;background:#e1e1e1;border:1px solid #adadad;box-sizing:border-box;"></div>
<svg style="left:382px;top:188px;" width="9" height="6" viewBox="0 0 9 6"><path d="M.7 .7L4.5 4.6L8.3 .7" fill="none" stroke="#505050" stroke-width="1"/></svg>
<span style="top:183.89px;font-size:11px;line-height:11px;color:#000;white-space:pre;letter-spacing:-0.2px;left:396.8px;">Datum od</span>
<div style="left:501px;top:181px;width:13px;height:17px;background:#e1e1e1;border:1px solid #adadad;box-sizing:border-box;"></div>
<svg style="left:503px;top:188px;" width="9" height="6" viewBox="0 0 9 6"><path d="M.7 .7L4.5 4.6L8.3 .7" fill="none" stroke="#505050" stroke-width="1"/></svg>
<span style="top:183.89px;font-size:11px;line-height:11px;color:#000;white-space:pre;letter-spacing:-0.2px;left:517.5px;">Datum do</span>
<div style="left:622px;top:181px;width:13px;height:17px;background:#e1e1e1;border:1px solid #adadad;box-sizing:border-box;"></div>
<svg style="left:624px;top:188px;" width="9" height="6" viewBox="0 0 9 6"><path d="M.7 .7L4.5 4.6L8.3 .7" fill="none" stroke="#505050" stroke-width="1"/></svg>
<span style="top:183.89px;font-size:11px;line-height:11px;color:#000;white-space:pre;letter-spacing:-0.2px;left:638.6px;">Opomba</span>
<div style="left:743px;top:181px;width:13px;height:17px;background:#e1e1e1;border:1px solid #adadad;box-sizing:border-box;"></div>
<svg style="left:745px;top:188px;" width="9" height="6" viewBox="0 0 9 6"><path d="M.7 .7L4.5 4.6L8.3 .7" fill="none" stroke="#505050" stroke-width="1"/></svg>
<span style="top:183.89px;font-size:11px;line-height:11px;color:#000;white-space:pre;letter-spacing:-0.2px;left:759.5px;">OP</span>
<svg style="left:487px;top:179px;" width="8" height="5" viewBox="0 0 8 5"><path d="M0 4.5L4 0L8 4.5Z" fill="#000"/></svg>
<span style="top:178.73px;font-size:8px;line-height:8px;color:#112;white-space:pre;left:495.5px;">1</span>
<svg style="left:27px;top:204px;" width="7" height="11" viewBox="0 0 7 11"><path d="M0 0L6.5 5.5L0 11Z" fill="#000"/></svg>
<div style="left:44px;top:204.5px;width:13px;height:12.5px;border-radius:50%;background:radial-gradient(circle at 40% 35%,#fff,#eee 70%,#ddd);"></div>
<div style="left:44px;top:222.5px;width:13px;height:12.5px;border-radius:50%;background:radial-gradient(circle at 40% 35%,#fff,#f4f4f4 70%,#ececec);"></div>
<span style="top:206.29px;font-size:11px;line-height:11px;color:#000;white-space:pre;letter-spacing:-0.1px;right:1746.7px;">210000004</span>
<span style="top:206.29px;font-size:11px;line-height:11px;color:#000;white-space:pre;letter-spacing:-0.75px;left:169.3px;">DRZOB</span>
<span style="top:206.29px;font-size:11px;line-height:11px;color:#000;white-space:pre;letter-spacing:-0.2px;left:270.3px;">Janez Novak</span>
<span style="top:206.29px;font-size:11px;line-height:11px;color:#000;white-space:pre;letter-spacing:0.05px;left:397px;">28.09.2021 09:00:00</span>
<span style="top:206.29px;font-size:11px;line-height:11px;color:#000;white-space:pre;letter-spacing:0.05px;left:518px;">28.09.2021 10:00:00</span>
<span style="top:206.29px;font-size:11px;line-height:11px;color:#000;white-space:pre;letter-spacing:-0.45px;left:759px;">DMU1</span>
<span style="top:224.29px;font-size:11px;line-height:11px;color:#000;white-space:pre;letter-spacing:-0.1px;right:1746.7px;">210000005</span>
<span style="top:224.29px;font-size:11px;line-height:11px;color:#000;white-space:pre;letter-spacing:-0.75px;left:169.3px;">DRZOB</span>
<span style="top:224.29px;font-size:11px;line-height:11px;color:#000;white-space:pre;letter-spacing:-0.2px;left:270.3px;">Marinka Novak</span>
<span style="top:224.29px;font-size:11px;line-height:11px;color:#000;white-space:pre;letter-spacing:0.05px;left:397px;">28.09.2021 10:00:00</span>
<span style="top:224.29px;font-size:11px;line-height:11px;color:#000;white-space:pre;letter-spacing:0.05px;left:518px;">28.09.2021 11:00:00</span>
<span style="top:224.29px;font-size:11px;line-height:11px;color:#000;white-space:pre;letter-spacing:-0.45px;left:759px;">DMU1</span>
<div style="left:792px;top:178px;width:17px;height:176px;background:#f0f0f0;"></div>
<div style="left:792px;top:196px;width:15px;height:95px;background:#cdcdcd;"></div>
<svg style="left:795px;top:185px;" width="9" height="6" viewBox="0 0 9 6"><path d="M.8 5.2L4.5 1.4L8.2 5.2" fill="none" stroke="#505050" stroke-width="1.9"/></svg>
<svg style="left:795px;top:342px;" width="9" height="6" viewBox="0 0 9 6"><path d="M.8 .8L4.5 4.6L8.2 .8" fill="none" stroke="#505050" stroke-width="1.9"/></svg>
<div style="left:22px;top:330px;width:770px;height:24px;background:#f0f0f0;"></div>
<div style="left:22px;top:330px;width:770px;height:1px;background:#d4d4d4;"></div>
<div style="left:552px;top:333px;width:155px;height:19px;background:#f0f0f0;border:1px solid #a0a0a0;box-sizing:border-box;"></div>
<span style="top:335.80px;font-size:13px;line-height:13px;color:#000;white-space:pre;left:556.3px;">Čas izvajanja: 00:00.015</span>
<div style="left:711px;top:333px;width:68px;height:19px;background:#f0f0f0;border:1px solid #a0a0a0;box-sizing:border-box;"></div>
<span style="top:335.80px;font-size:13px;line-height:13px;color:#000;white-space:pre;left:715px;">Zapis: 1/2</span>
<div style="left:22px;top:354px;width:787px;height:18px;background:#f0f0f0;"></div>
<div style="left:22px;top:353px;width:770px;height:1px;background:#fff;"></div>
<div style="left:40px;top:355px;width:17px;height:15px;background:#cdcdcd;"></div>
<svg style="left:28px;top:358px;" width="6" height="9" viewBox="0 0 6 9"><path d="M5.2 .8L1.4 4.5L5.2 8.2" fill="none" stroke="#505050" stroke-width="1.9"/></svg>
<svg style="left:780px;top:358px;" width="6" height="9" viewBox="0 0 6 9"><path d="M.8 .8L4.6 4.5L.8 8.2" fill="none" stroke="#505050" stroke-width="1.9"/></svg>
<div style="left:813px;top:177px;width:1076px;height:197px;background:#fff;border:1px solid #a0a0a0;box-sizing:border-box;border-bottom:none;"></div>
<div style="left:834px;top:220px;width:846px;height:17px;background:#f0f0f0;"></div>
<div style="left:834px;top:201px;width:846px;height:1px;background:#c8c8c8;"></div>
<div style="left:814px;top:201px;width:19px;height:1px;background:#e6e6e6;"></div>
<div style="left:834px;top:219px;width:846px;height:1px;background:#c8c8c8;"></div>
<div style="left:814px;top:219px;width:19px;height:1px;background:#e6e6e6;"></div>
<div style="left:834px;top:237px;width:846px;height:1px;background:#c8c8c8;"></div>
<div style="left:814px;top:237px;width:19px;height:1px;background:#e6e6e6;"></div>
<div style="left:833px;top:178px;width:1px;height:59px;background:#c8c8c8;"></div>
<div style="left:886px;top:178px;width:1px;height:59px;background:#c8c8c8;"></div>
<div style="left:1037px;top:178px;width:1px;height:59px;background:#c8c8c8;"></div>
<div style="left:1188px;top:178px;width:1px;height:59px;background:#c8c8c8;"></div>
<div style="left:1489px;top:178px;width:1px;height:59px;background:#c8c8c8;"></div>
<div style="left:1558px;top:178px;width:1px;height:59px;background:#c8c8c8;"></div>
<div style="left:1679px;top:178px;width:1px;height:59px;background:#c8c8c8;"></div>
<div style="left:833px;top:178px;width:1px;height:59px;background:#e6e6e6;"></div>
<div style="left:834px;top:220px;width:52px;height:17px;background:#0078d7;border:1px dotted #d08030;box-sizing:border-box;"></div>
<div style="left:816px;top:181px;width:15px;height:17px;background:#e1e1e1;border:1px solid #adadad;box-sizing:border-box;"></div>
<svg style="left:818px;top:183px;" width="12" height="14" viewBox="0 0 12 14"><rect x=".5" y=".5" width="7" height="10" fill="#fff" stroke="#8c8c8c" stroke-width="1"/><rect x="1.2" y="1.2" width="3" height="8.6" fill="#c4d4f6"/><rect x="2" y="2.6" width="1" height="1" fill="#404040"/><rect x="2" y="5" width="1" height="1" fill="#404040"/><rect x="2" y="7.4" width="1" height="1" fill="#404040"/><rect x="4.6" y="2.6" width="1" height="1" fill="#404040"/><rect x="4.6" y="5" width="1" height="1" fill="#404040"/><rect x="4.6" y="7.4" width="1" height="1" fill="#404040"/><path d="M5 2.4 L5 11.4 L7 9.6 L8.4 12.8 L9.8 12.2 L8.4 9.2 L11 9 Z" fill="#fff" stroke="#222" stroke-width=".8"/></svg>
<span style="top:183.89px;font-size:11px;line-height:11px;color:#000;white-space:pre;letter-spacing:-0.2px;left:835.5px;">Šifra</span>
<div style="left:872px;top:181px;width:13px;height:17px;background:#e1e1e1;border:1px solid #adadad;box-sizing:border-box;"></div>
<svg style="left:874px;top:188px;" width="9" height="6" viewBox="0 0 9 6"><path d="M.7 .7L4.5 4.6L8.3 .7" fill="none" stroke="#505050" stroke-width="1"/></svg>
<span style="top:183.89px;font-size:11px;line-height:11px;color:#000;white-space:pre;letter-spacing:-0.2px;left:889px;">Storitev</span>
<div style="left:1023px;top:181px;width:13px;height:17px;background:#e1e1e1;border:1px solid #adadad;box-sizing:border-box;"></div>
<svg style="left:1025px;top:188px;" width="9" height="6" viewBox="0 0 9 6"><path d="M.7 .7L4.5 4.6L8.3 .7" fill="none" stroke="#505050" stroke-width="1"/></svg>
<span style="top:183.89px;font-size:11px;line-height:11px;color:#000;white-space:pre;letter-spacing:-0.2px;left:1040px;">Vrsta</span>
<div style="left:1174px;top:181px;width:13px;height:17px;background:#e1e1e1;border:1px solid #adadad;box-sizing:border-box;"></div>
<svg style="left:1176px;top:188px;" width="9" height="6" viewBox="0 0 9 6"><path d="M.7 .7L4.5 4.6L8.3 .7" fill="none" stroke="#505050" stroke-width="1"/></svg>
<span style="top:183.89px;font-size:11px;line-height:11px;color:#000;white-space:pre;letter-spacing:-0.2px;left:1191px;">Opomba</span>
<div style="left:1475px;top:181px;width:13px;height:17px;background:#e1e1e1;border:1px solid #adadad;box-sizing:border-box;"></div>
<svg style="left:1477px;top:188px;" width="9" height="6" viewBox="0 0 9 6"><path d="M.7 .7L4.5 4.6L8.3 .7" fill="none" stroke="#505050" stroke-width="1"/></svg>
<span style="top:183.89px;font-size:11px;line-height:11px;color:#000;white-space:pre;letter-spacing:-0.2px;left:1491.5px;">OP</span>
<div style="left:1545px;top:181px;width:13px;height:17px;background:#e1e1e1;border:1px solid #adadad;box-sizing:border-box;"></div>
<svg style="left:1547px;top:188px;" width="9" height="6" viewBox="0 0 9 6"><path d="M.7 .7L4.5 4.6L8.3 .7" fill="none" stroke="#505050" stroke-width="1"/></svg>
<span style="top:183.89px;font-size:11px;line-height:11px;color:#000;white-space:pre;letter-spacing:-0.2px;left:1561px;">Datum spremembe</span>
<div style="left:1665px;top:181px;width:13px;height:17px;background:#e1e1e1;border:1px solid #adadad;box-sizing:border-box;"></div>
<svg style="left:1667px;top:188px;" width="9" height="6" viewBox="0 0 9 6"><path d="M.7 .7L4.5 4.6L8.3 .7" fill="none" stroke="#505050" stroke-width="1"/></svg>
<svg style="left:820px;top:222px;" width="7" height="11" viewBox="0 0 7 11"><path d="M0 0L6.5 5.5L0 11Z" fill="#000"/></svg>
<span style="top:206.29px;font-size:11px;line-height:11px;color:#000;white-space:pre;right:1028px;">155</span>
<span style="top:206.29px;font-size:11px;line-height:11px;color:#000;white-space:pre;letter-spacing:-0.15px;left:889px;">Abutment</span>
<span style="top:206.29px;font-size:11px;line-height:11px;color:#000;white-space:pre;letter-spacing:-0.2px;left:1039.5px;">Protetika</span>
<span style="top:206.29px;font-size:11px;line-height:11px;color:#000;white-space:pre;letter-spacing:-0.45px;left:1491px;">DMU1</span>
<span style="top:206.29px;font-size:11px;line-height:11px;color:#000;white-space:pre;letter-spacing:0.05px;left:1561.5px;">28.09.2021 07:33:09</span>
<span style="top:224.29px;font-size:11px;line-height:11px;color:#fff;white-space:pre;right:1028px;">220</span>
<span style="top:224.29px;font-size:11px;line-height:11px;color:#000;white-space:pre;letter-spacing:-0.14px;left:889px;">Alveoloplastika/nivelacija kosti</span>
<span style="top:224.29px;font-size:11px;line-height:11px;color:#000;white-space:pre;letter-spacing:-0.2px;left:1039.5px;">Kirurgija</span>
<span style="top:224.29px;font-size:11px;line-height:11px;color:#000;white-space:pre;letter-spacing:-0.45px;left:1491px;">DMU1</span>
<span style="top:224.29px;font-size:11px;line-height:11px;color:#000;white-space:pre;letter-spacing:0.05px;left:1561.5px;">28.09.2021 11:11:37</span>
<div style="left:1871px;top:178px;width:17px;height:194px;background:#f0f0f0;"></div>
<div style="left:1871px;top:249px;width:15px;height:105px;background:#cdcdcd;"></div>
<svg style="left:1874px;top:185px;" width="9" height="6" viewBox="0 0 9 6"><path d="M.8 5.2L4.5 1.4L8.2 5.2" fill="none" stroke="#505050" stroke-width="1.9"/></svg>
<svg style="left:1874px;top:359px;" width="9" height="6" viewBox="0 0 9 6"><path d="M.8 .8L4.5 4.6L8.2 .8" fill="none" stroke="#505050" stroke-width="1.9"/></svg>
<div style="left:814px;top:347px;width:1057px;height:26px;background:#f0f0f0;"></div>
<div style="left:814px;top:347px;width:1057px;height:1px;background:#d4d4d4;"></div>
<div style="left:1631px;top:350px;width:155px;height:19px;background:#f0f0f0;border:1px solid #a0a0a0;box-sizing:border-box;"></div>
<span style="top:352.80px;font-size:13px;line-height:13px;color:#000;white-space:pre;left:1635px;">Čas izvajanja: 00:00.000</span>
<div style="left:1790px;top:350px;width:68px;height:19px;background:#f0f0f0;border:1px solid #a0a0a0;box-sizing:border-box;"></div>
<span style="top:352.80px;font-size:13px;line-height:13px;color:#000;white-space:pre;left:1794px;">Zapis: 2/2</span>
<div style="left:21px;top:371px;width:1868px;height:1px;background:#dcdcdc;"></div>
<div style="left:21px;top:372px;width:1868px;height:1px;background:#b0b0b0;"></div>
<div style="left:21px;top:373px;width:1868px;height:2px;background:#787878;"></div>
<div style="left:21px;top:375px;width:1868px;height:44px;background:#fdd9cc;"></div>
<div style="left:1887px;top:375px;width:1px;height:45px;background:#fff;"></div>
<div style="left:21px;top:372px;width:1px;height:48px;background:#808080;"></div>
<div style="left:24px;top:376px;width:123px;height:42px;background:#cfe4f7;border:1px solid #2a64a8;box-sizing:border-box;"></div>
<span style="top:392.99px;font-size:11px;line-height:11px;color:#000;white-space:pre;font-weight:700;letter-spacing:-0.2px;left:-114.2px;width:400px;text-align:center;">DRZOB</span>
<div style="left:21px;top:419px;width:1868px;height:1px;background:#fff;"></div>
<svg style="left:30px;top:431px;" width="11" height="14" viewBox="0 0 11 14"><path d="M9 1L2.2 7L9 13" fill="none" stroke="#000" stroke-width="2.4"/></svg>
<svg style="left:60px;top:431px;" width="11" height="14" viewBox="0 0 11 14"><path d="M2 1L8.8 7L2 13" fill="none" stroke="#000" stroke-width="2.4"/></svg>
<span style="top:429.60px;font-size:17.6px;line-height:17.6px;color:#444;white-space:pre;left:81.5px;">28.09.2021 - 28.09.2021</span>
<div style="left:1467px;top:432px;width:13px;height:13px;border-radius:50%;background:radial-gradient(circle at 35% 30%,#ff6a6a,#f01010 60%,#d00000);"></div>
<span style="top:432.69px;font-size:11px;line-height:11px;color:#000;white-space:pre;letter-spacing:-0.17px;left:1483.6px;">Google Calendar: ni povezave</span>
<span style="top:432.69px;font-size:11px;line-height:11px;color:#a0a4ac;white-space:pre;letter-spacing:-0.2px;left:1657.3px;">Sinhronizacija</span>
<div style="left:1733px;top:435px;width:1px;height:1px;background:#808080;"></div>
<div style="left:1733px;top:440px;width:1px;height:1px;background:#808080;"></div>
<svg style="left:1740px;top:431px;" width="17" height="16" viewBox="0 0 17 16"><rect x=".5" y=".8" width="12" height="12.4" rx=".8" fill="#fff" stroke="#9aa6c8" stroke-width="1"/><path d="M.5 1.6a.8.8 0 0 1 .8-.8h10.4a.8.8 0 0 1 .8.8V4H.5z" fill="#e0584e" stroke="#b83a32" stroke-width=".7"/><path d="M6.800000000000001 17.0 C6.800000000000001 13.8 9.0 12.8 10.200000000000001 12.600000000000001 L12.6 12.600000000000001 C13.8 12.8 16.0 13.8 16.0 17.0Z" fill="#4a78d8" stroke="#234a9c" stroke-width=".8"/><path d="M10.4 12.7 L11.4 14.600000000000001 L12.4 12.7Z" fill="#fff"/><ellipse cx="11.4" cy="9.4" rx="2.7" ry="3.1" fill="#f7b25c" stroke="#b86a18" stroke-width=".6"/><path d="M8.4 9.200000000000001 C8.0 5.6000000000000005 14.8 5.6000000000000005 14.4 9.200000000000001 C13.4 7.4 9.4 7.4 8.4 9.200000000000001Z" fill="#8a4f24"/></svg>
<span style="top:432.69px;font-size:11px;line-height:11px;color:#000;white-space:pre;letter-spacing:-0.19px;left:1759.2px;">Prijava v Google Calendar</span>
<div style="left:21px;top:454px;width:145px;height:127px;background:#fff;border:1px solid #a0a0a0;box-sizing:border-box;"></div>
<div style="left:22px;top:455px;width:143px;height:18px;background:#f3f3f3;"></div>
<svg style="left:28px;top:460px;" width="6" height="9" viewBox="0 0 6 9"><path d="M5.5 0L0 4.5L5.5 9Z" fill="#444"/></svg>
<svg style="left:152px;top:460px;" width="6" height="9" viewBox="0 0 6 9"><path d="M.5 0L6 4.5L.5 9Z" fill="#444"/></svg>
<span style="top:459.19px;font-size:11px;line-height:11px;color:#000;white-space:pre;letter-spacing:-0.1px;left:-107.5px;width:400px;text-align:center;">september 2021</span>
<span style="top:475.19px;font-size:11px;line-height:11px;color:#000;white-space:pre;left:-154.7px;width:400px;text-align:center;">p</span>
<span style="top:475.19px;font-size:11px;line-height:11px;color:#000;white-space:pre;left:-137.65px;width:400px;text-align:center;">t</span>
<span style="top:475.19px;font-size:11px;line-height:11px;color:#000;white-space:pre;left:-120.6px;width:400px;text-align:center;">s</span>
<span style="top:475.19px;font-size:11px;line-height:11px;color:#000;white-space:pre;left:-103.55px;width:400px;text-align:center;">č</span>
<span style="top:475.19px;font-size:11px;line-height:11px;color:#000;white-space:pre;left:-86.5px;width:400px;text-align:center;">p</span>
<span style="top:475.19px;font-size:11px;line-height:11px;color:#000;white-space:pre;left:-69.44999999999999px;width:400px;text-align:center;">s</span>
<span style="top:475.19px;font-size:11px;line-height:11px;color:#000;white-space:pre;left:-52.39999999999998px;width:400px;text-align:center;">n</span>
<div style="left:34px;top:489px;width:1px;height:89px;background:#808080;"></div>
<div style="left:53px;top:549px;width:17px;height:15px;background:#0078d7;border:1px solid #7a1020;box-sizing:border-box;"></div>
<span style="top:494.27px;font-size:7px;line-height:7px;color:#333;white-space:pre;right:1879px;">36</span>
<span style="top:492.09px;font-size:11px;line-height:11px;color:#808080;white-space:pre;letter-spacing:-0.1px;right:1861.4px;">30</span>
<span style="top:492.09px;font-size:11px;line-height:11px;color:#808080;white-space:pre;letter-spacing:-0.1px;right:1844.3px;">31</span>
<span style="top:492.09px;font-size:11px;line-height:11px;color:#000;white-space:pre;letter-spacing:-0.1px;right:1827.2px;">1</span>
<span style="top:492.09px;font-size:11px;line-height:11px;color:#000;white-space:pre;letter-spacing:-0.1px;right:1810.1px;">2</span>
<span style="top:492.09px;font-size:11px;line-height:11px;color:#000;white-space:pre;letter-spacing:-0.1px;right:1793.0px;">3</span>
<span style="top:492.09px;font-size:11px;line-height:11px;color:#000;white-space:pre;letter-spacing:-0.1px;right:1775.9px;">4</span>
<span style="top:492.09px;font-size:11px;line-height:11px;color:#000;white-space:pre;letter-spacing:-0.1px;right:1758.8px;">5</span>
<span style="top:509.22px;font-size:7px;line-height:7px;color:#333;white-space:pre;right:1879px;">37</span>
<span style="top:507.04px;font-size:11px;line-height:11px;color:#000;white-space:pre;letter-spacing:-0.1px;right:1861.4px;">6</span>
<span style="top:507.04px;font-size:11px;line-height:11px;color:#000;white-space:pre;letter-spacing:-0.1px;right:1844.3px;">7</span>
<span style="top:507.04px;font-size:11px;line-height:11px;color:#000;white-space:pre;letter-spacing:-0.1px;right:1827.2px;">8</span>
<span style="top:507.04px;font-size:11px;line-height:11px;color:#000;white-space:pre;letter-spacing:-0.1px;right:1810.1px;">9</span>
<span style="top:507.04px;font-size:11px;line-height:11px;color:#000;white-space:pre;letter-spacing:-0.1px;right:1793.0px;">10</span>
<span style="top:507.04px;font-size:11px;line-height:11px;color:#000;white-space:pre;letter-spacing:-0.1px;right:1775.9px;">11</span>
<span style="top:507.04px;font-size:11px;line-height:11px;color:#000;white-space:pre;letter-spacing:-0.1px;right:1758.8px;">12</span>
<span style="top:524.17px;font-size:7px;line-height:7px;color:#333;white-space:pre;right:1879px;">38</span>
<span style="top:521.99px;font-size:11px;line-height:11px;color:#000;white-space:pre;letter-spacing:-0.1px;right:1861.4px;">13</span>
<span style="top:521.99px;font-size:11px;line-height:11px;color:#000;white-space:pre;letter-spacing:-0.1px;right:1844.3px;">14</span>
<span style="top:521.99px;font-size:11px;line-height:11px;color:#000;white-space:pre;letter-spacing:-0.1px;right:1827.2px;">15</span>
<span style="top:521.99px;font-size:11px;line-height:11px;color:#000;white-space:pre;letter-spacing:-0.1px;right:1810.1px;">16</span>
<span style="top:521.99px;font-size:11px;line-height:11px;color:#000;white-space:pre;letter-spacing:-0.1px;right:1793.0px;">17</span>
<span style="top:521.99px;font-size:11px;line-height:11px;color:#000;white-space:pre;letter-spacing:-0.1px;right:1775.9px;">18</span>
<span style="top:521.99px;font-size:11px;line-height:11px;color:#000;white-space:pre;letter-spacing:-0.1px;right:1758.8px;">19</span>
<span style="top:539.12px;font-size:7px;line-height:7px;color:#333;white-space:pre;right:1879px;">39</span>
<span style="top:536.94px;font-size:11px;line-height:11px;color:#000;white-space:pre;letter-spacing:-0.1px;right:1861.4px;">20</span>
<span style="top:536.94px;font-size:11px;line-height:11px;color:#000;white-space:pre;letter-spacing:-0.1px;right:1844.3px;">21</span>
<span style="top:536.94px;font-size:11px;line-height:11px;color:#000;white-space:pre;letter-spacing:-0.1px;right:1827.2px;">22</span>
<span style="top:536.94px;font-size:11px;line-height:11px;color:#000;white-space:pre;letter-spacing:-0.1px;right:1810.1px;">23</span>
<span style="top:536.94px;font-size:11px;line-height:11px;color:#000;white-space:pre;letter-spacing:-0.1px;right:1793.0px;">24</span>
<span style="top:536.94px;font-size:11px;line-height:11px;color:#000;white-space:pre;letter-spacing:-0.1px;right:1775.9px;">25</span>
<span style="top:536.94px;font-size:11px;line-height:11px;color:#000;white-space:pre;letter-spacing:-0.1px;right:1758.8px;">26</span>
<span style="top:554.07px;font-size:7px;line-height:7px;color:#333;white-space:pre;right:1879px;">40</span>
<span style="top:551.89px;font-size:11px;line-height:11px;color:#000;white-space:pre;letter-spacing:-0.1px;right:1861.4px;">27</span>
<span style="top:551.89px;font-size:11px;line-height:11px;color:#fff;white-space:pre;letter-spacing:-0.1px;right:1844.3px;">28</span>
<span style="top:551.89px;font-size:11px;line-height:11px;color:#000;white-space:pre;letter-spacing:-0.1px;right:1827.2px;">29</span>
<span style="top:551.89px;font-size:11px;line-height:11px;color:#000;white-space:pre;letter-spacing:-0.1px;right:1810.1px;">30</span>
<span style="top:551.89px;font-size:11px;line-height:11px;color:#808080;white-space:pre;letter-spacing:-0.1px;right:1793.0px;">1</span>
<span style="top:551.89px;font-size:11px;line-height:11px;color:#808080;white-space:pre;letter-spacing:-0.1px;right:1775.9px;">2</span>
<span style="top:551.89px;font-size:11px;line-height:11px;color:#808080;white-space:pre;letter-spacing:-0.1px;right:1758.8px;">3</span>
<span style="top:569.02px;font-size:7px;line-height:7px;color:#333;white-space:pre;right:1879px;">41</span>
<span style="top:566.84px;font-size:11px;line-height:11px;color:#808080;white-space:pre;letter-spacing:-0.1px;right:1861.4px;">4</span>
<span style="top:566.84px;font-size:11px;line-height:11px;color:#808080;white-space:pre;letter-spacing:-0.1px;right:1844.3px;">5</span>
<span style="top:566.84px;font-size:11px;line-height:11px;color:#808080;white-space:pre;letter-spacing:-0.1px;right:1827.2px;">6</span>
<span style="top:566.84px;font-size:11px;line-height:11px;color:#808080;white-space:pre;letter-spacing:-0.1px;right:1810.1px;">7</span>
<span style="top:566.84px;font-size:11px;line-height:11px;color:#808080;white-space:pre;letter-spacing:-0.1px;right:1793.0px;">8</span>
<span style="top:566.84px;font-size:11px;line-height:11px;color:#808080;white-space:pre;letter-spacing:-0.1px;right:1775.9px;">9</span>
<span style="top:566.84px;font-size:11px;line-height:11px;color:#808080;white-space:pre;letter-spacing:-0.1px;right:1758.8px;">10</span>
<div style="left:21px;top:584px;width:145px;height:436px;background:#f0f0f0;border:1px solid #a8a8a8;box-sizing:border-box;"></div>
<div style="left:24px;top:651px;width:139px;height:30px;background:#e1e1e1;border:1px solid #adadad;box-sizing:border-box;"></div>
<svg style="left:70px;top:594px;" width="16" height="16" viewBox="0 0 16 16"><rect x="3.5" y="4.5" width="12" height="11" fill="#fff" stroke="#5d6fb0" stroke-width="1"/><rect x="4" y="5" width="11" height="2.2" fill="#c6d4f0"/><path d="M9 9.4l1.6-.9v5.6M9.2 14.2h3" stroke="#303878" stroke-width="1.1" fill="none"/><path d="M.6 1.4 L4.4 .8 L6 3 L7.8 2.2 L7.4 7.4 L2.4 6.6 L3.8 5.2Z" fill="#58c038" stroke="#2d7a18" stroke-width=".7"/></svg>
<span style="top:598.39px;font-size:11px;line-height:11px;color:#000;white-space:pre;letter-spacing:-0.1px;left:88.1px;">Danes</span>
<svg style="left:62.5px;top:626.5px;" width="15.5" height="14.5" viewBox="0 0 16 16" preserveAspectRatio="none"><rect x=".5" y=".8" width="15" height="14.4" rx=".8" fill="#fff" stroke="#8f9fcc" stroke-width="1"/><path d="M.5 1.6a.8.8 0 0 1 .8-.8h13.4a.8.8 0 0 1 .8.8V4.4H.5z" fill="#e0584e" stroke="#b83a32" stroke-width=".7"/><rect x="2.4" y="6" width="1.1" height="7.6" fill="#8f9fd8"/><rect x="4.6" y="6" width="1.1" height="7.6" fill="#8f9fd8"/><rect x="6.800000000000001" y="6" width="1.1" height="7.6" fill="#8f9fd8"/><rect x="9.0" y="6" width="1.1" height="7.6" fill="#8f9fd8"/><rect x="11.200000000000001" y="6" width="1.1" height="7.6" fill="#e0584e"/><rect x="13.4" y="6" width="1.1" height="7.6" fill="#e0584e"/></svg>
<span style="top:630.39px;font-size:11px;line-height:11px;color:#000;white-space:pre;letter-spacing:-0.1px;left:82.1px;">Tedenski</span>
<svg style="left:67.8px;top:658.7px;" width="14.5" height="14.5" viewBox="0 0 16 16" preserveAspectRatio="none"><rect x=".5" y=".8" width="15" height="14.4" rx=".8" fill="#fff" stroke="#8f9fcc" stroke-width="1"/><path d="M.5 1.6a.8.8 0 0 1 .8-.8h13.4a.8.8 0 0 1 .8.8V4.4H.5z" fill="#e0584e" stroke="#b83a32" stroke-width=".7"/><rect x="2.6" y="6.2" width="6" height="6" fill="#d03030"/><rect x="4.6" y="8.2" width="2" height="2" fill="#fff"/><rect x="10" y="6.4" width="1" height="1" fill="#9aa6c8"/><rect x="10" y="8.4" width="1" height="1" fill="#9aa6c8"/><rect x="10" y="10.4" width="1" height="1" fill="#9aa6c8"/><rect x="10" y="12.4" width="1" height="1" fill="#9aa6c8"/><rect x="12" y="6.4" width="1" height="1" fill="#9aa6c8"/><rect x="12" y="8.4" width="1" height="1" fill="#9aa6c8"/><rect x="12" y="10.4" width="1" height="1" fill="#9aa6c8"/><rect x="12" y="12.4" width="1" height="1" fill="#9aa6c8"/></svg>
<span style="top:662.39px;font-size:11px;line-height:11px;color:#000;white-space:pre;letter-spacing:-0.1px;left:86.2px;">Dnevni</span>
<svg style="left:69.5px;top:689.5px;" width="15" height="16" viewBox="1 0 15 16"><path d="M3.6 2.7 C3.6 0.1 12.4 0.1 12.4 2.7 L12.4 12.3 C12.4 14.9 3.6 14.9 3.6 12.3 Z" fill="url(#gcyl)" stroke="#a97a10" stroke-width="1.1"/><path d="M4.2 2.7 C4.2 1 11.8 1 11.8 2.7 C11.8 4.3 4.2 4.3 4.2 2.7Z" fill="#fff6b0" stroke="#c9a227" stroke-width=".5"/><path d="M3.4 7.6 C4.2 4.4 8.6 3.4 11.2 5.2 L12.4 3.6 L14.6 8.4 L9.4 8.6 L10.4 7 C8.8 6 6.4 6.4 5.6 8.2 Z" fill="#48c448" stroke="#1d7a1d" stroke-width=".7"/><path d="M3.4 7.6 C4.2 4.4 8.6 3.4 11.2 5.2 L12.4 3.6 L14.6 8.4 L9.4 8.6 L10.4 7 C8.8 6 6.4 6.4 5.6 8.2 Z" fill="#48c448" stroke="#1d7a1d" stroke-width=".7" transform="rotate(180 8 8.2)"/></svg>
<span style="top:694.19px;font-size:11px;line-height:11px;color:#000;white-space:pre;letter-spacing:-0.2px;left:85.4px;">Osveži</span>
<div style="left:169px;top:454px;width:1720px;height:566px;background:#fff;border:1px solid #9a9a9a;box-sizing:border-box;"></div>
<div style="left:217px;top:455px;width:1671px;height:37px;background:#dbeaf7;"></div>
<div style="left:216px;top:455px;width:1px;height:564px;background:#a0a0a0;"></div>
<span style="top:470.29px;font-size:11px;line-height:11px;color:#333;white-space:pre;left:854.5px;width:400px;text-align:center;">torek, 28. september</span>
<div style="left:177px;top:491px;width:40px;height:1px;background:#989898;"></div>
<span style="top:496.49px;font-size:16.2px;line-height:16.2px;color:#9a9a9a;white-space:pre;letter-spacing:-0.5px;left:182px;z-index:2;">07</span>
<span style="top:493.56px;font-size:10.8px;line-height:10.8px;color:#a0a0a0;white-space:pre;letter-spacing:-0.15px;left:202.4px;">00</span>
<div style="left:206px;top:513px;width:11px;height:1px;background:#989898;"></div>
<div style="left:217px;top:513px;width:1671px;height:1px;background:repeating-linear-gradient(90deg,#d9d9d9 0 1px,transparent 1px 3px);"></div>
<span style="top:516.46px;font-size:10.8px;line-height:10.8px;color:#a0a0a0;white-space:pre;letter-spacing:-0.15px;left:202.4px;">15</span>
<div style="left:206px;top:535px;width:11px;height:1px;background:#989898;"></div>
<div style="left:217px;top:535px;width:1671px;height:1px;background:repeating-linear-gradient(90deg,#d9d9d9 0 1px,transparent 1px 3px);"></div>
<span style="top:538.46px;font-size:10.8px;line-height:10.8px;color:#a0a0a0;white-space:pre;letter-spacing:-0.15px;left:202.4px;">30</span>
<div style="left:206px;top:557px;width:11px;height:1px;background:#989898;"></div>
<div style="left:217px;top:557px;width:1671px;height:1px;background:repeating-linear-gradient(90deg,#d9d9d9 0 1px,transparent 1px 3px);"></div>
<span style="top:560.46px;font-size:10.8px;line-height:10.8px;color:#a0a0a0;white-space:pre;letter-spacing:-0.15px;left:202.4px;">45</span>
<div style="left:177px;top:579px;width:40px;height:1px;background:#989898;"></div>
<div style="left:217px;top:579px;width:1671px;height:1px;background:#dcdcdc;"></div>
<span style="top:584.49px;font-size:16.2px;line-height:16.2px;color:#9a9a9a;white-space:pre;letter-spacing:-0.5px;left:182px;z-index:2;">08</span>
<span style="top:581.56px;font-size:10.8px;line-height:10.8px;color:#a0a0a0;white-space:pre;letter-spacing:-0.15px;left:202.4px;">00</span>
<div style="left:206px;top:601px;width:11px;height:1px;background:#989898;"></div>
<div style="left:217px;top:601px;width:1671px;height:1px;background:repeating-linear-gradient(90deg,#d9d9d9 0 1px,transparent 1px 3px);"></div>
<span style="top:604.46px;font-size:10.8px;line-height:10.8px;color:#a0a0a0;white-space:pre;letter-spacing:-0.15px;left:202.4px;">15</span>
<div style="left:206px;top:623px;width:11px;height:1px;background:#989898;"></div>
<div style="left:217px;top:623px;width:1671px;height:1px;background:repeating-linear-gradient(90deg,#d9d9d9 0 1px,transparent 1px 3px);"></div>
<span style="top:626.46px;font-size:10.8px;line-height:10.8px;color:#a0a0a0;white-space:pre;letter-spacing:-0.15px;left:202.4px;">30</span>
<div style="left:206px;top:645px;width:11px;height:1px;background:#989898;"></div>
<div style="left:217px;top:645px;width:1671px;height:1px;background:repeating-linear-gradient(90deg,#d9d9d9 0 1px,transparent 1px 3px);"></div>
<span style="top:648.46px;font-size:10.8px;line-height:10.8px;color:#a0a0a0;white-space:pre;letter-spacing:-0.15px;left:202.4px;">45</span>
<div style="left:177px;top:667px;width:40px;height:1px;background:#989898;"></div>
<div style="left:217px;top:667px;width:1671px;height:1px;background:#dcdcdc;"></div>
<span style="top:672.49px;font-size:16.2px;line-height:16.2px;color:#9a9a9a;white-space:pre;letter-spacing:-0.5px;left:182px;z-index:2;">09</span>
<span style="top:669.56px;font-size:10.8px;line-height:10.8px;color:#a0a0a0;white-space:pre;letter-spacing:-0.15px;left:202.4px;">00</span>
<div style="left:206px;top:689px;width:11px;height:1px;background:#989898;"></div>
<div style="left:217px;top:689px;width:1671px;height:1px;background:repeating-linear-gradient(90deg,#d9d9d9 0 1px,transparent 1px 3px);"></div>
<span style="top:692.46px;font-size:10.8px;line-height:10.8px;color:#a0a0a0;white-space:pre;letter-spacing:-0.15px;left:202.4px;">15</span>
<div style="left:206px;top:711px;width:11px;height:1px;background:#989898;"></div>
<div style="left:217px;top:711px;width:1671px;height:1px;background:repeating-linear-gradient(90deg,#d9d9d9 0 1px,transparent 1px 3px);"></div>
<span style="top:714.46px;font-size:10.8px;line-height:10.8px;color:#a0a0a0;white-space:pre;letter-spacing:-0.15px;left:202.4px;">30</span>
<div style="left:206px;top:733px;width:11px;height:1px;background:#989898;"></div>
<div style="left:217px;top:733px;width:1671px;height:1px;background:repeating-linear-gradient(90deg,#d9d9d9 0 1px,transparent 1px 3px);"></div>
<span style="top:736.46px;font-size:10.8px;line-height:10.8px;color:#a0a0a0;white-space:pre;letter-spacing:-0.15px;left:202.4px;">45</span>
<div style="left:177px;top:755px;width:40px;height:1px;background:#989898;"></div>
<div style="left:217px;top:755px;width:1671px;height:1px;background:#dcdcdc;"></div>
<span style="top:760.49px;font-size:16.2px;line-height:16.2px;color:#9a9a9a;white-space:pre;letter-spacing:-0.5px;left:182px;z-index:2;">10</span>
<span style="top:757.56px;font-size:10.8px;line-height:10.8px;color:#a0a0a0;white-space:pre;letter-spacing:-0.15px;left:202.4px;">00</span>
<div style="left:206px;top:777px;width:11px;height:1px;background:#989898;"></div>
<div style="left:217px;top:777px;width:1671px;height:1px;background:repeating-linear-gradient(90deg,#d9d9d9 0 1px,transparent 1px 3px);"></div>
<span style="top:780.46px;font-size:10.8px;line-height:10.8px;color:#a0a0a0;white-space:pre;letter-spacing:-0.15px;left:202.4px;">15</span>
<div style="left:206px;top:799px;width:11px;height:1px;background:#989898;"></div>
<div style="left:217px;top:799px;width:1671px;height:1px;background:repeating-linear-gradient(90deg,#d9d9d9 0 1px,transparent 1px 3px);"></div>
<span style="top:802.46px;font-size:10.8px;line-height:10.8px;color:#a0a0a0;white-space:pre;letter-spacing:-0.15px;left:202.4px;">30</span>
<div style="left:206px;top:821px;width:11px;height:1px;background:#989898;"></div>
<div style="left:217px;top:821px;width:1671px;height:1px;background:repeating-linear-gradient(90deg,#d9d9d9 0 1px,transparent 1px 3px);"></div>
<span style="top:824.46px;font-size:10.8px;line-height:10.8px;color:#a0a0a0;white-space:pre;letter-spacing:-0.15px;left:202.4px;">45</span>
<div style="left:177px;top:843px;width:40px;height:1px;background:#989898;"></div>
<div style="left:217px;top:843px;width:1671px;height:1px;background:#dcdcdc;"></div>
<span style="top:848.49px;font-size:16.2px;line-height:16.2px;color:#9a9a9a;white-space:pre;letter-spacing:-0.5px;left:182px;z-index:2;">11</span>
<span style="top:845.56px;font-size:10.8px;line-height:10.8px;color:#a0a0a0;white-space:pre;letter-spacing:-0.15px;left:202.4px;">00</span>
<div style="left:206px;top:865px;width:11px;height:1px;background:#989898;"></div>
<div style="left:217px;top:865px;width:1671px;height:1px;background:repeating-linear-gradient(90deg,#d9d9d9 0 1px,transparent 1px 3px);"></div>
<span style="top:868.46px;font-size:10.8px;line-height:10.8px;color:#a0a0a0;white-space:pre;letter-spacing:-0.15px;left:202.4px;">15</span>
<div style="left:206px;top:887px;width:11px;height:1px;background:#989898;"></div>
<div style="left:217px;top:887px;width:1671px;height:1px;background:repeating-linear-gradient(90deg,#d9d9d9 0 1px,transparent 1px 3px);"></div>
<span style="top:890.46px;font-size:10.8px;line-height:10.8px;color:#a0a0a0;white-space:pre;letter-spacing:-0.15px;left:202.4px;">30</span>
<div style="left:206px;top:909px;width:11px;height:1px;background:#989898;"></div>
<div style="left:217px;top:909px;width:1671px;height:1px;background:repeating-linear-gradient(90deg,#d9d9d9 0 1px,transparent 1px 3px);"></div>
<span style="top:912.46px;font-size:10.8px;line-height:10.8px;color:#a0a0a0;white-space:pre;letter-spacing:-0.15px;left:202.4px;">45</span>
<div style="left:177px;top:931px;width:40px;height:1px;background:#989898;"></div>
<div style="left:217px;top:931px;width:1671px;height:1px;background:#dcdcdc;"></div>
<span style="top:936.49px;font-size:16.2px;line-height:16.2px;color:#9a9a9a;white-space:pre;letter-spacing:-0.5px;left:182px;z-index:2;">12</span>
<span style="top:933.56px;font-size:10.8px;line-height:10.8px;color:#a0a0a0;white-space:pre;letter-spacing:-0.15px;left:202.4px;">00</span>
<div style="left:206px;top:953px;width:11px;height:1px;background:#989898;"></div>
<div style="left:217px;top:953px;width:1671px;height:1px;background:repeating-linear-gradient(90deg,#d9d9d9 0 1px,transparent 1px 3px);"></div>
<span style="top:956.46px;font-size:10.8px;line-height:10.8px;color:#a0a0a0;white-space:pre;letter-spacing:-0.15px;left:202.4px;">15</span>
<div style="left:206px;top:975px;width:11px;height:1px;background:#989898;"></div>
<div style="left:217px;top:975px;width:1671px;height:1px;background:repeating-linear-gradient(90deg,#d9d9d9 0 1px,transparent 1px 3px);"></div>
<span style="top:978.46px;font-size:10.8px;line-height:10.8px;color:#a0a0a0;white-space:pre;letter-spacing:-0.15px;left:202.4px;">30</span>
<div style="left:206px;top:997px;width:11px;height:1px;background:#989898;"></div>
<div style="left:217px;top:997px;width:1671px;height:1px;background:repeating-linear-gradient(90deg,#d9d9d9 0 1px,transparent 1px 3px);"></div>
<span style="top:1000.46px;font-size:10.8px;line-height:10.8px;color:#a0a0a0;white-space:pre;letter-spacing:-0.15px;left:202.4px;">45</span>
<div style="left:177px;top:1019px;width:40px;height:1px;background:#989898;"></div>
<div style="left:217px;top:1019px;width:1671px;height:1px;background:#dcdcdc;"></div>
<div style="left:218px;top:624px;width:1670px;height:21px;background:#0078d7;"></div>
<div style="left:170px;top:851px;width:46px;height:6px;background:linear-gradient(rgba(255,255,255,.95),#fbd6ae);z-index:1;"></div>
<div style="left:170px;top:857px;width:46px;height:1px;background:#f2a45a;z-index:1;"></div>
<div style="left:217px;top:667px;width:1666px;height:87px;background:#fff;border:1px solid #000;box-sizing:border-box;"></div>
<div style="left:218px;top:668px;width:7px;height:43px;background:#7ffcff;"></div>
<div style="left:218px;top:711px;width:7px;height:42px;background:#ffff80;"></div>
<span style="top:672.14px;font-size:10.3px;line-height:10.3px;color:#000;white-space:pre;font-weight:700;font-family:'DejaVu Sans',sans-serif;letter-spacing:-0.15px;left:227px;">Janez Novak</span>
<span style="top:672.14px;font-size:10.3px;line-height:10.3px;color:#000;white-space:pre;font-weight:700;font-family:'DejaVu Sans',sans-serif;right:31.5px;">DMU1</span>
<div style="left:226px;top:685px;width:1654px;height:1px;background:#909090;"></div>
<span style="top:690.29px;font-size:11px;line-height:11px;color:#000;white-space:pre;letter-spacing:-0.12px;left:226.3px;">Kidričeva centa 92</span>
<span style="top:703.19px;font-size:11px;line-height:11px;color:#000;white-space:pre;letter-spacing:-0.2px;left:226.6px;">4220 Škofja Loka</span>
<span style="top:729.19px;font-size:11px;line-height:11px;color:#000;white-space:pre;letter-spacing:-0.1px;left:226.6px;">Abutment</span>
<div style="left:217px;top:755px;width:1666px;height:87px;background:#fff;border:1px solid #000;box-sizing:border-box;"></div>
<div style="left:218px;top:756px;width:7px;height:85px;background:#7ffcff;"></div>
<span style="top:760.14px;font-size:10.3px;line-height:10.3px;color:#000;white-space:pre;font-weight:700;font-family:'DejaVu Sans',sans-serif;letter-spacing:-0.15px;left:227px;">Marinka Novak</span>
<span style="top:760.14px;font-size:10.3px;line-height:10.3px;color:#000;white-space:pre;font-weight:700;font-family:'DejaVu Sans',sans-serif;right:31.5px;">DMU1</span>
<div style="left:226px;top:773px;width:1654px;height:1px;background:#909090;"></div>
<span style="top:778.29px;font-size:11px;line-height:11px;color:#000;white-space:pre;letter-spacing:-0.12px;left:226.3px;">Kidričeva cesta 92</span>
<span style="top:791.19px;font-size:11px;line-height:11px;color:#000;white-space:pre;letter-spacing:-0.2px;left:226.6px;">4220 Škofja Loka</span>
<span style="top:817.19px;font-size:11px;line-height:11px;color:#000;white-space:pre;letter-spacing:-0.1px;left:226.6px;">Abutment-začasni</span>
<div style="left:18px;top:1020px;width:1871px;height:3px;background:#d0d4de;"></div>
<div style="left:21px;top:1020px;width:1868px;height:1px;background:#a8acb4;"></div>
</body></html>
